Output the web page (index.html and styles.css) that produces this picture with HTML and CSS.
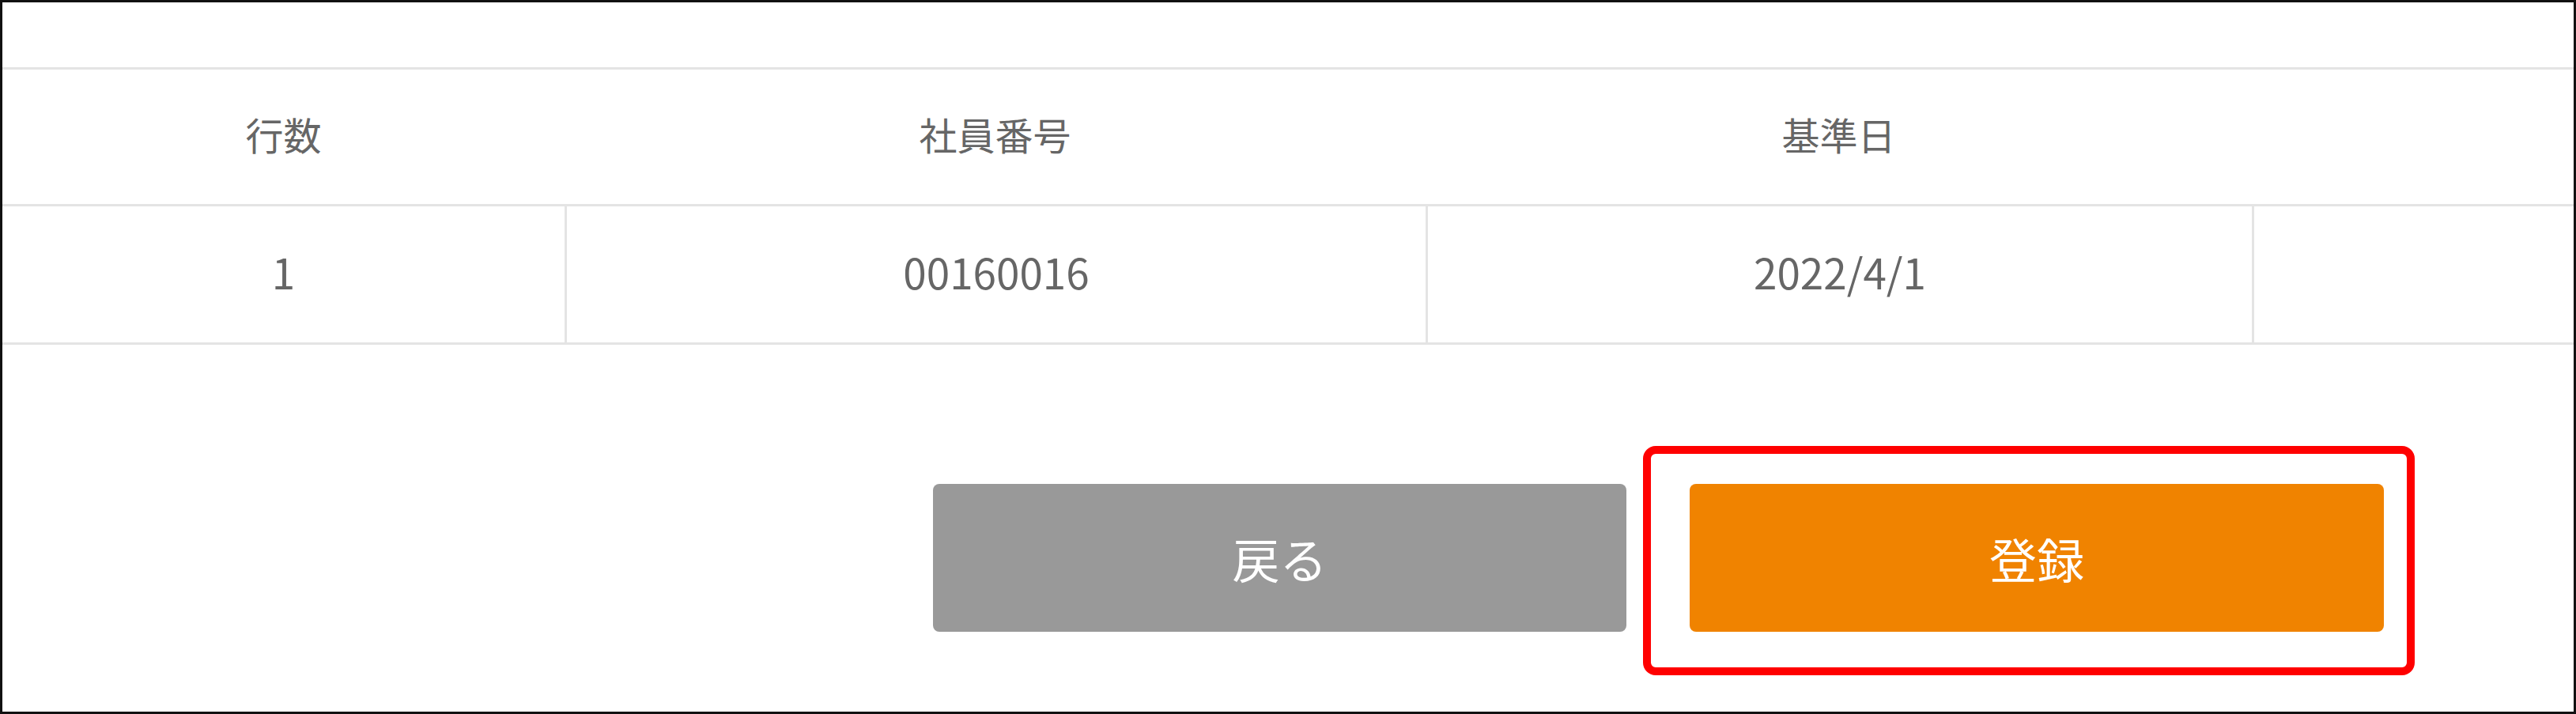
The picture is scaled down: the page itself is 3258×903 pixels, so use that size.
FILE: index.html
```html
<!DOCTYPE html>
<html lang="ja">
<head>
<meta charset="utf-8">
<title>登録確認</title>
<link rel="stylesheet" href="styles.css">
</head>
<body>
<div class="frame">
  <div class="top-space"></div>
  <div class="table">
    <div class="row head">
      <div class="cell">行数</div>
      <div class="cell">社員番号</div>
      <div class="cell">基準日</div>
      <div class="cell"></div>
    </div>
    <div class="row body">
      <div class="cell">1</div>
      <div class="cell">00160016</div>
      <div class="cell">2022/4/1</div>
      <div class="cell"></div>
    </div>
  </div>
  <div class="actions">
    <button class="btn btn-back" type="button">戻る</button>
    <div class="highlight-wrap">
      <button class="btn btn-submit" type="button">登録</button>
      <div class="highlight"></div>
    </div>
  </div>
</div>
</body>
</html>
```

FILE: styles.css
```css
html, body {
  margin: 0;
  padding: 0;
  background: #ffffff;
}

.frame {
  box-sizing: border-box;
  width: 3258px;
  height: 903px;
  border: 3px solid #111111;
  background: #ffffff;
  font-family: "Noto Sans CJK JP", "Noto Sans", sans-serif;
  overflow: hidden;
}

.top-space {
  height: 82px;
}

.table {
  border-top: 3px solid #e4e4e4;
}

.row {
  display: grid;
  grid-template-columns: 711px 1089px 1045px 1fr;
  border-bottom: 3px solid #e4e4e4;
}

.row.head {
  height: 170px;
}

.row.body {
  height: 172px;
}

.cell {
  display: flex;
  align-items: center;
  justify-content: center;
  color: #666666;
  font-size: 48px;
  line-height: 1;
  box-sizing: border-box;
  padding-bottom: 8px;
}

.row.body .cell {
  font-size: 53px;
}

.row.body .cell + .cell {
  border-left: 3px solid #e4e4e4;
}

.actions {
  display: flex;
  justify-content: flex-end;
  gap: 80px;
  padding-top: 176px;
  padding-right: 240px;
}

.btn {
  width: 877px;
  height: 187px;
  border: none;
  border-radius: 8px;
  color: #ffffff;
  font-family: "Noto Sans CJK JP", "Noto Sans", sans-serif;
  font-size: 60px;
  line-height: 1;
  padding: 0;
  cursor: pointer;
}

.btn-back {
  background: #999999;
}

.btn-submit {
  width: 878px;
  background: #f08300;
}

.highlight-wrap {
  position: relative;
  display: flex;
}

.highlight {
  position: absolute;
  left: -59px;
  top: -48px;
  right: -39px;
  bottom: -55px;
  border: 10px solid #ff0000;
  border-radius: 16px;
  pointer-events: none;
}
```
